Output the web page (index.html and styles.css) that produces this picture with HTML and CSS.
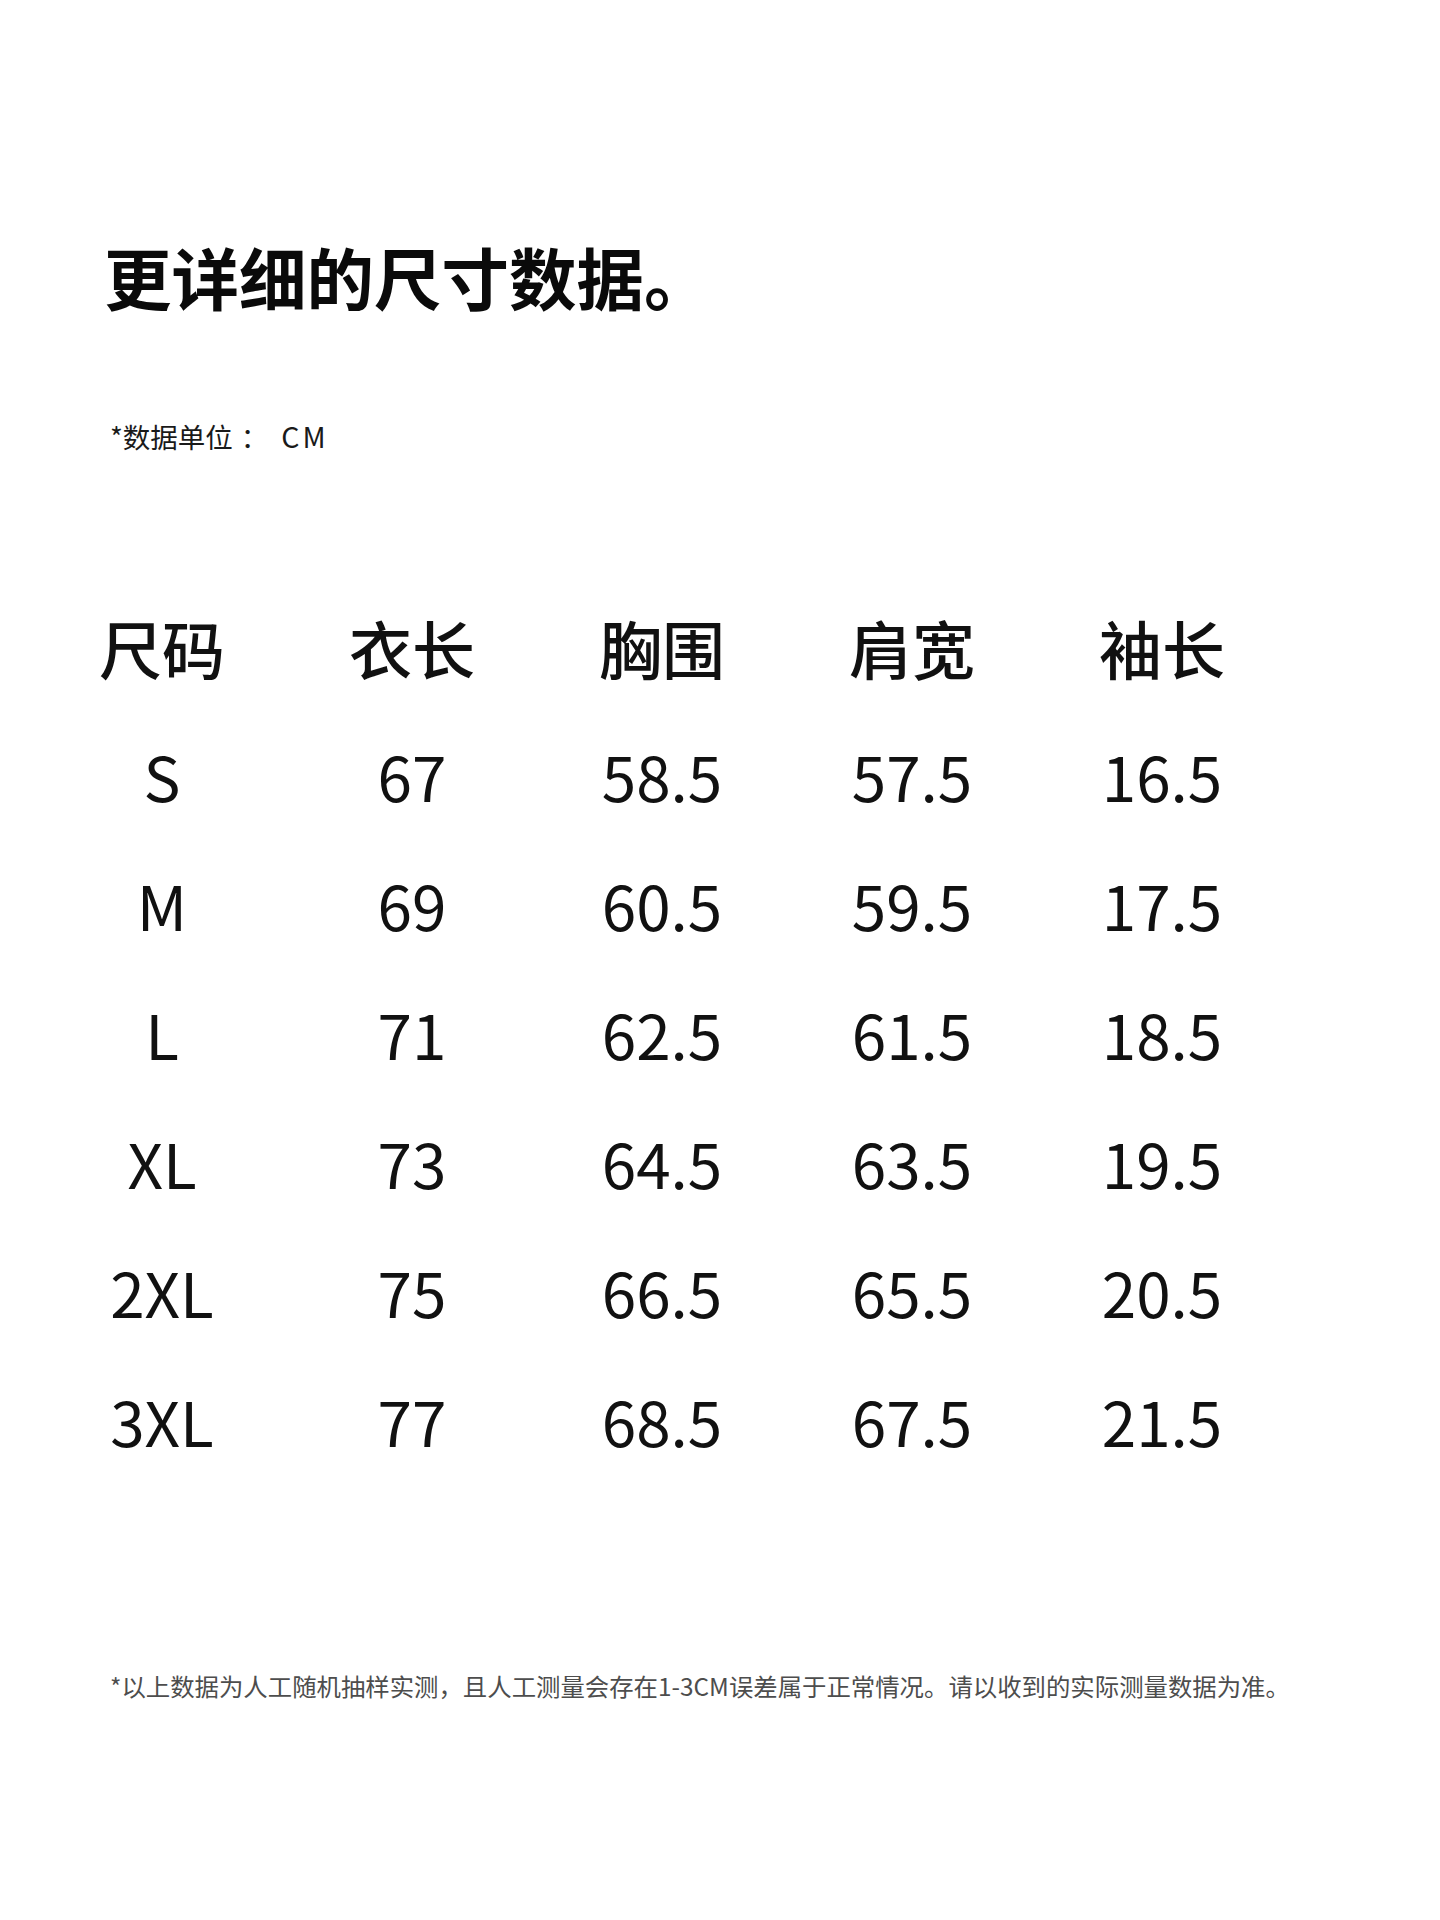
FILE: index.html
```html
<!DOCTYPE html>
<html lang="zh-CN">
<head>
<meta charset="utf-8">
<title>尺寸数据</title>
<link rel="stylesheet" href="styles.css">
</head>
<body>
<main class="page">
  <h1 class="title">更详细的尺寸数据。</h1>
  <p class="unit">*数据单位<span class="unit-sep">：</span><span class="unit-cm">CM</span></p>
  <div class="table">
    <div class="cell head">尺码</div><div class="cell head">衣长</div><div class="cell head">胸围</div><div class="cell head">肩宽</div><div class="cell head">袖长</div>
    <div class="cell">S</div><div class="cell">67</div><div class="cell">58.5</div><div class="cell">57.5</div><div class="cell">16.5</div>
    <div class="cell">M</div><div class="cell">69</div><div class="cell">60.5</div><div class="cell">59.5</div><div class="cell">17.5</div>
    <div class="cell">L</div><div class="cell">71</div><div class="cell">62.5</div><div class="cell">61.5</div><div class="cell">18.5</div>
    <div class="cell">XL</div><div class="cell">73</div><div class="cell">64.5</div><div class="cell">63.5</div><div class="cell">19.5</div>
    <div class="cell">2XL</div><div class="cell">75</div><div class="cell">66.5</div><div class="cell">65.5</div><div class="cell">20.5</div>
    <div class="cell">3XL</div><div class="cell">77</div><div class="cell">68.5</div><div class="cell">67.5</div><div class="cell">21.5</div>
  </div>
  <p class="note">*以上数据为人工随机抽样实测，且人工测量会存在1-3CM误差属于正常情况。请以收到的实际测量数据为准。</p>
</main>
</body>
</html>
```

FILE: styles.css
```css
html, body {
  margin: 0;
  padding: 0;
  background: #ffffff;
}

body {
  width: 1440px;
  min-height: 1920px;
  font-family: "Noto Sans CJK SC", "Noto Sans", sans-serif;
  color: #111111;
}

.page {
  display: flex;
  flex-direction: column;
  padding-top: 236px;
}

.title {
  margin: 0 0 0 104px;
  font-size: 67.5px;
  font-weight: 700;
  line-height: 80px;
  color: #0a0a0a;
}

.unit {
  margin: 100px 0 0 110px;
  font-size: 27.5px;
  line-height: 40px;
  color: #1a1a1a;
}

.unit-sep {
  margin-left: 8px;
}

.unit-cm {
  margin-left: 13px;
  letter-spacing: 3px;
  font-size: 28.5px;
}

.table {
  margin-top: 126px;
  margin-left: 37px;
  display: grid;
  grid-template-columns: repeat(5, 250px);
  grid-auto-rows: 129px;
}

.cell {
  font-size: 62px;
  line-height: 129px;
  text-align: center;
  color: #111111;
}

.cell.head {
  font-weight: 500;
  font-size: 63px;
}

.note {
  margin: 181px 0 0 110px;
  font-size: 24.4px;
  line-height: 40px;
  color: #4d4d4d;
  white-space: nowrap;
}
```
